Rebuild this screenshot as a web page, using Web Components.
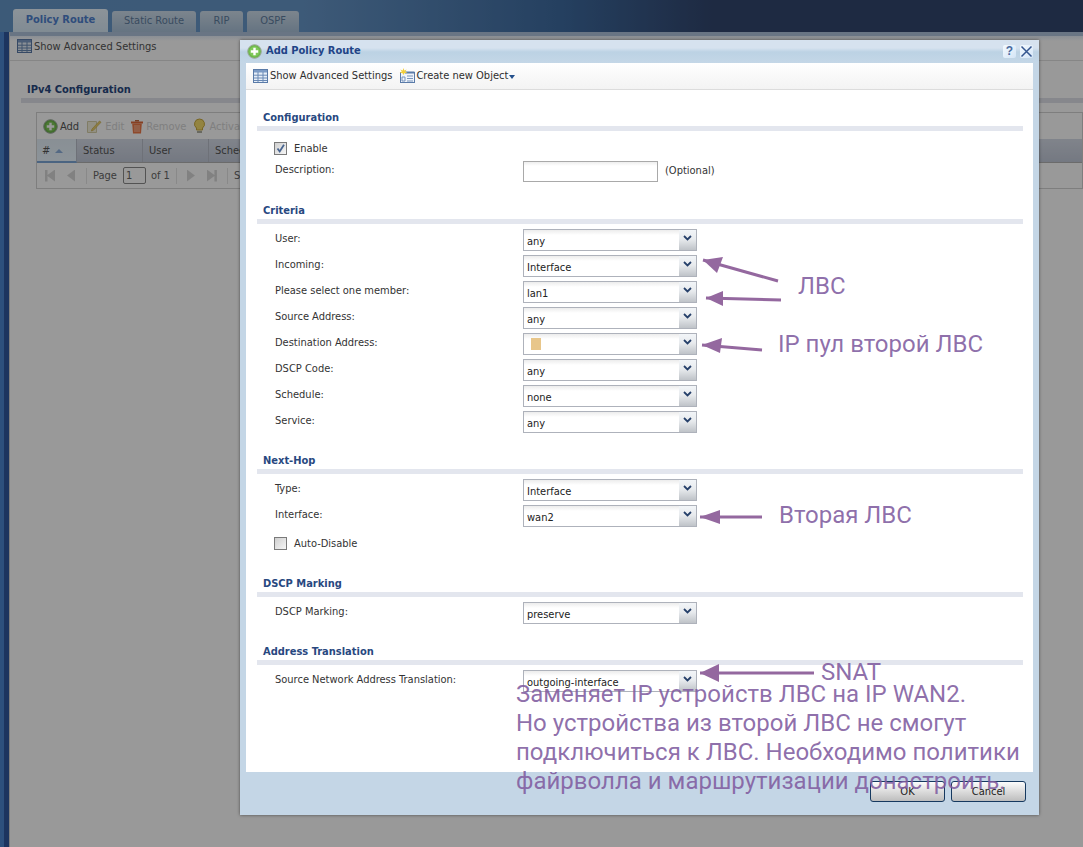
<!DOCTYPE html>
<html lang="ru">
<head>
<meta charset="utf-8">
<title>Add Policy Route</title>
<style>
  html, body { margin: 0; height: 847px; overflow: hidden; background: #fff; }
  body { font: 11px "DejaVu Sans Condensed", "DejaVu Sans", sans-serif; color: #333; }
</style>
</head>
<body>
<app-shell>
  <tab-bar slot="tabs">
    <tab-item active>Policy Route</tab-item>
    <tab-item w="84">Static Route</tab-item>
    <tab-item w="43">RIP</tab-item>
    <tab-item w="52">OSPF</tab-item>
  </tab-bar>
  <back-panel></back-panel>
</app-shell>
<modal-mask></modal-mask>
<policy-dialog>
  <form-section heading="Configuration" gap="19">
    <check-row checked tight>Enable</check-row>
    <form-row label="Description:"><text-box></text-box><span style="margin-left:7px;margin-top:-2px">(Optional)</span></form-row>
  </form-section>
  <form-section heading="Criteria" gap="18">
    <form-row label="User:"><combo-box>any</combo-box></form-row>
    <form-row label="Incoming:"><combo-box>Interface</combo-box></form-row>
    <form-row label="Please select one member:"><combo-box>lan1</combo-box></form-row>
    <form-row label="Source Address:"><combo-box>any</combo-box></form-row>
    <form-row label="Destination Address:"><combo-box><span style="display:block;width:10px;height:12px;margin:-2px 0 0 4px;background:#e8c68a"></span></combo-box></form-row>
    <form-row label="DSCP Code:"><combo-box>any</combo-box></form-row>
    <form-row label="Schedule:"><combo-box>none</combo-box></form-row>
    <form-row label="Service:"><combo-box>any</combo-box></form-row>
  </form-section>
  <form-section heading="Next-Hop" gap="20">
    <form-row label="Type:"><combo-box>Interface</combo-box></form-row>
    <form-row label="Interface:"><combo-box>wan2</combo-box></form-row>
    <check-row style="margin-top:1px">Auto-Disable</check-row>
  </form-section>
  <form-section heading="DSCP Marking" gap="18">
    <form-row label="DSCP Marking:"><combo-box>preserve</combo-box></form-row>
  </form-section>
  <form-section heading="Address Translation" gap="0">
    <form-row label="Source Network Address Translation:"><combo-box>outgoing-interface</combo-box></form-row>
  </form-section>
</policy-dialog>
<note-layer>
  <note-text x="798" y="272">ЛВС</note-text>
  <note-text x="778" y="330">IP пул второй ЛВС</note-text>
  <note-text x="779" y="501">Вторая ЛВС</note-text>
  <note-text x="821" y="658">SNAT</note-text>
  <note-text x="516" y="680">Заменяет IP устройств ЛВС на IP WAN2.<br>Но устройства из второй ЛВС не смогут<br>подключиться к ЛВС. Необходимо политики<br>файрволла и маршрутизации донастроить.</note-text>
</note-layer>

<script>
// shared icons
const ICONS = {
  table: `<svg width="15" height="14" viewBox="0 0 15 14"><rect x=".5" y=".5" width="14" height="13" fill="#e6eef8" stroke="#5a7ba8"/><rect x="1" y="1" width="13" height="2.5" fill="#7d9cc6"/><path d="M5 3v10M10 3v10M1 6.2h13M1 9h13M1 11.5h13" stroke="#6a8ab5" fill="none"/></svg>`,
  plus: `<svg width="15" height="15" viewBox="0 0 15 15"><circle cx="7.5" cy="7.5" r="6.8" fill="#6db84a" stroke="#9ba89a"/><circle cx="7.5" cy="7.5" r="5" fill="#7fc85a"/><path d="M7.5 3.8v7.4M3.8 7.5h7.4" stroke="#fff" stroke-width="2.4"/></svg>`,
  edit: `<svg width="16" height="15" viewBox="0 0 16 15"><path d="M1.5 2.5h9v11h-9z" fill="#f4f0dc" stroke="#d6cfa8"/><path d="M6 10l7.5-8 1.5 1.3L7.4 11.3 5.4 12z" fill="#ecd06a" stroke="#c9ad50" stroke-width=".7"/></svg>`,
  trash: `<svg width="12" height="15" viewBox="0 0 12 15"><path d="M4 1h4v1.5H4z" fill="#c06a40"/><path d="M0 2.5h12v2H0z" fill="#e06a3a"/><path d="M1.2 4.5h9.6L10 14.5H2z" fill="#ee7a48"/><path d="M4 6v7M6 6v7M8 6v7" stroke="#f8c4a8" fill="none"/></svg>`,
  bulb: `<svg width="13" height="16" viewBox="0 0 13 16"><path d="M6.5 1a5 5 0 0 1 3 9v2h-6v-2a5 5 0 0 1 3-9z" fill="#f6dc6c" stroke="#c8a93c"/><path d="M4 13h5v2H4z" fill="#b0b0a0"/></svg>`,
  create: `<svg width="16" height="15" viewBox="0 0 16 15"><rect x="1.5" y="4.5" width="14" height="10" fill="#eef3fa" stroke="#5a7ba8"/><rect x="6" y="3.5" width="9.5" height="2" fill="#5a7ba8"/><path d="M3 9h3v4H3zM8 8h6M8 10.5h6M8 13h6" stroke="#6a8ab5" fill="none" stroke-width=".9"/><path d="M4.5 0l.8 2.4L7.7 1.6 6.2 3.6 8.4 5H5.6L4.5 7 3.4 5H.6l2.2-1.4L1.3 1.6l2.4.8z" fill="#f2cf3a"/></svg>`
};

class AppShell extends HTMLElement {
  constructor() {
    super();
    this.attachShadow({ mode: 'open' }).innerHTML = `
      <style>
        :host { display: flex; flex-direction: column; height: 847px; }
        .row { flex: 1; display: flex; min-height: 0; }
        .rail { width: 10px; flex: none; background: linear-gradient(90deg, #4c85d0 0 4px, #30589e 4px 9px, #d0d0d0 9px); }
        .main { flex: 1; min-width: 0; display: flex; }
      </style>
      <slot name="tabs"></slot>
      <div class="row"><div class="rail"></div><div class="main"><slot></slot></div></div>`;
  }
}

class TabBar extends HTMLElement {
  constructor() {
    super();
    this.attachShadow({ mode: 'open' }).innerHTML = `
      <style>
        :host { display: flex; flex: none; height: 23px; padding: 9px 0 0 13px; gap: 4px; align-items: flex-end;
          background: linear-gradient(90deg, #6596c8, #6796c8 28%, #3e6ba0 52%, #32466e 66%, #32466e); }
      </style>
      <slot></slot>`;
  }
}

class TabItem extends HTMLElement {
  constructor() {
    super();
    const active = this.hasAttribute('active');
    const w = this.getAttribute('w') || 95;
    this.attachShadow({ mode: 'open' }).innerHTML = `
      <style>
        :host { display: block; box-sizing: border-box; width: ${w}px; height: ${active ? 23 : 21}px;
          border-radius: 3px 3px 0 0; text-align: center;
          line-height: ${active ? 21 : 19}px;
          font-weight: ${active ? 'bold' : 'normal'};
          color: ${active ? '#4f80cf' : '#5f7d9f'};
          background: linear-gradient(${active ? '#eaf6ff, #d6e8f6' : '#cfdeec, #a9c1d8'}); }
      </style>
      <slot></slot>`;
  }
}

class BackPanel extends HTMLElement {
  constructor() {
    super();
    this.attachShadow({ mode: 'open' }).innerHTML = `
      <style>
        :host { display: block; flex: 1; min-width: 0; background: #fff; border-top: 4px solid #b0c4dc; color: #555; }
        .bar { box-sizing: border-box; height: 25px; padding: 0 0 4px 7px; display: flex; align-items: center; gap: 2px;
          border-bottom: 1px solid #e0e0e0; background: linear-gradient(#e6eef8, #fff 5px); }
        .bar svg { flex: none; }
        h3 { margin: 0 0 1px; height: 15px; padding: 21px 0 0 17px; font-size: 11px; line-height: 15px; color: #28487f; }
        .rule { height: 5px; margin: 0 0 0 11px; background: #dfe2ea; }
        .grid { box-sizing: border-box; margin: 9px 0 0 26px; border: 1px solid #d2d2d2; height: 77px; display: flex; flex-direction: column; }
        .tools { height: 26px; display: flex; align-items: center; padding-left: 6px; gap: 7px; }
        .tools span { display: flex; align-items: center; gap: 3px; color: #d4d4d4; }
        .tools span.on { color: #555; gap: 2px; }
        .head { box-sizing: border-box; height: 24px; display: flex; background: linear-gradient(#d6dce8, #c2c9d8); border-bottom: 1px solid #b3b3b3; color: #555; }
        .head div { box-sizing: border-box; width: 66px; padding: 5px 0 0 6px; border-right: 1px solid #b8bdc8; display: flex; gap: 5px; line-height: 13px; }
        .head div:first-child { width: 40px; padding-left: 5px; border-bottom: 2px solid #7da7d8; background: linear-gradient(#e4eff8, #eaf6ff); margin-bottom: -1px; height: 24px; }
        .head div:first-child i { width: 0; height: 0; margin-top: 5px; border: 4px solid transparent; border-bottom: 4px solid #8cb0dc; border-top: 0; }
        .pager { flex: 1; display: flex; align-items: center; color: #666; }
        .pager i { display: block; flex: none; width: 8px; height: 12px; background: #d8d8d8; clip-path: polygon(100% 0, 100% 100%, 0 50%); }
        .pager i.r { clip-path: polygon(0 0, 100% 50%, 0 100%); }
        .pager i.f { width: 10px; clip-path: polygon(0 0, 25% 0, 25% 45%, 100% 0, 100% 100%, 25% 55%, 25% 100%, 0 100%); }
        .pager i.l { width: 10px; clip-path: polygon(0 0, 75% 45%, 75% 0, 100% 0, 100% 100%, 75% 100%, 75% 55%, 0 100%); }
        .pager s { display: block; width: 1px; height: 16px; background: #e4e4e4; flex: none; }
        .pager b { font-weight: normal; box-sizing: border-box; width: 23px; height: 17px; line-height: 15px; border: 1px solid #8a8a8a; border-radius: 2px; padding-left: 2px; background: #fff; }
      </style>
      <div class="bar">${ICONS.table}<span>Show Advanced Settings</span></div>
      <h3>IPv4 Configuration</h3>
      <div class="rule"></div>
      <div class="grid">
        <div class="tools">
          <span class="on">${ICONS.plus}Add</span>
          <span>${ICONS.edit}Edit</span>
          <span>${ICONS.trash}Remove</span>
          <span>${ICONS.bulb}Activate</span>
        </div>
        <div class="head"><div>#<i></i></div><div>Status</div><div>User</div><div>Schedule</div></div>
        <div class="pager">
          <i class="f" style="margin-left:8px"></i><i style="margin-left:12px"></i><s style="margin-left:11px"></s>
          <span style="margin-left:6px">Page</span><b style="margin-left:6px">1</b><span style="margin-left:5px">of 1</span>
          <s style="margin-left:6px"></s><i class="r" style="margin-left:10px"></i><i class="l" style="margin-left:12px"></i>
          <s style="margin-left:10px"></s><span style="margin-left:6px">Show</span>
        </div>
      </div>`;
  }
}

class ModalMask extends HTMLElement {
  constructor() {
    super();
    this.attachShadow({ mode: 'open' }).innerHTML = `
      <style>:host { display: block; position: absolute; inset: 0; background: rgba(0,0,0,.4); }</style>`;
  }
}

const dialogTpl = document.createElement('template');
dialogTpl.innerHTML = `
  <style>
    :host { display: flex; flex-direction: column; position: absolute; left: 240px; top: 40px; width: 799px; height: 775px;
      box-sizing: border-box; background: #c4d6e6; box-shadow: 0 0 3px rgba(0,0,0,.5); }
    .title { height: 23px; flex: none; display: flex; align-items: center; padding: 0 6px 0 7px; gap: 4px;
      background: linear-gradient(#d6e2ef 0 8px, #bcd2e4 12px, #c4d7e7); font-weight: bold; font-size: 11px; color: #1f4487; }
    .title span { flex: 1; padding-bottom: 2px; }
    .title i { display: block; width: 13px; height: 13px; border-radius: 2px; background: linear-gradient(135deg, #f4faff, #d4e5f6);
      font: bold 12px/13px "Liberation Sans", sans-serif; text-align: center; color: #4a6a9e; }
    .title i + i { margin-left: 0; }
    .body { flex: none; height: 709px; margin: 0 6px; background: #fff; display: flex; flex-direction: column; }
    .tools { height: 27px; flex: none; box-sizing: border-box; padding: 0 0 1px 7px; display: flex; align-items: center;
      background: linear-gradient(#fff, #f3f3f3); border-bottom: 1px solid #dcdcdc; color: #2e2e2e; }
    .tools .arr { width: 0; height: 0; border: 3px solid transparent; border-top: 4px solid #24508c; border-bottom: 0; margin: 3px 0 0 1px; }
    .form { padding: 20px 10px 0 11px; }
    .foot { flex: 1; display: flex; justify-content: flex-end; gap: 6px; padding: 9px 13px 0 0; }
    .foot button { width: 75px; height: 21px; padding: 0; box-sizing: border-box; border: 1px solid #16395f; border-radius: 3px;
      background: linear-gradient(#fcfcfc, #d9d9d9 55%, #bdbdbd); font: 11px "DejaVu Sans Condensed", sans-serif; color: #222; }
  </style>
  <div class="title">${ICONS.plus}<span>Add Policy Route</span><i>?</i><i><svg width="13" height="13" viewBox="0 0 13 13"><path d="M1.5 1.5l10 10M11.5 1.5l-10 10" stroke="#35568f" stroke-width="1.5" fill="none"/></svg></i></div>
  <div class="body">
    <div class="tools">${ICONS.table}<span style="margin:0 7px 0 2px">Show Advanced Settings</span>${ICONS.create}<span style="margin-left:1px">Create new Object</span><div class="arr"></div></div>
    <div class="form"><slot></slot></div>
  </div>
  <div class="foot"><button>OK</button><button>Cancel</button></div>`;

class PolicyDialog extends HTMLElement {
  constructor() {
    super();
    this.attachShadow({ mode: 'open' }).appendChild(dialogTpl.content.cloneNode(true));
  }
}

class FormSection extends HTMLElement {
  constructor() {
    super();
    this.attachShadow({ mode: 'open' }).innerHTML = `
      <style>
        :host { display: block; margin-bottom: ${this.getAttribute('gap') || 0}px; }
        h4 { margin: 0 0 1px; padding-left: 6px; height: 15px; line-height: 15px; font-size: 11px; font-weight: bold; color: #28487f; }
        .rule { height: 5px; background: #e3e6ee; }
        .rows { padding-top: 3px; }
      </style>
      <h4>${this.getAttribute('heading')}</h4>
      <div class="rule"></div>
      <div class="rows"><slot></slot></div>`;
  }
}

class FormRow extends HTMLElement {
  constructor() {
    super();
    this.attachShadow({ mode: 'open' }).innerHTML = `
      <style>
        :host { display: flex; height: 26px; align-items: center; padding-left: 18px; }
        label { width: 248px; flex: none; align-self: flex-start; padding-top: 5px; line-height: 14px; color: #333; white-space: nowrap; }
      </style>
      <label>${this.getAttribute('label')}</label><slot></slot>`;
  }
}

class CheckRow extends HTMLElement {
  constructor() {
    super();
    const on = this.hasAttribute('checked');
    this.attachShadow({ mode: 'open' }).innerHTML = `
      <style>
        :host { display: flex; height: 26px; align-items: center; padding-left: 17px; gap: 7px; color: #333;
          ${this.hasAttribute('tight') ? 'margin: 1px 0 -3px;' : ''} }
        .box { width: 13px; height: 13px; box-sizing: border-box; border: 1px solid #7a7a7a; background: linear-gradient(135deg, #cfcfcf, #f6f6f6); display: block; }
      </style>
      <svg class="box" viewBox="0 0 11 11">${on ? '<path d="M2.5 5.5l2.2 3L9 1.8" stroke="#48648f" stroke-width="1.8" fill="none"/>' : ''}</svg>
      <slot></slot>`;
  }
}

class TextBox extends HTMLElement {
  constructor() {
    super();
    this.attachShadow({ mode: 'open' }).innerHTML = `
      <style>
        :host { display: block; width: 135px; height: 21px; box-sizing: border-box; border: 1px solid #a9a9a9;
          background: linear-gradient(#eee, #fff 4px); }
      </style>`;
  }
}

class ComboBox extends HTMLElement {
  constructor() {
    super();
    this.attachShadow({ mode: 'open' }).innerHTML = `
      <style>
        :host { display: flex; width: 174px; height: 22px; box-sizing: border-box; border: 1px solid #aeb2bb; }
        .val { flex: 1; min-width: 0; padding: 2px 0 0 3px; display: flex; align-items: center; color: #222;
          background: linear-gradient(#ececec, #fff 5px); white-space: nowrap; }
        .btn { width: 17px; flex: none; display: flex; align-items: flex-start; justify-content: center; padding-top: 5px; box-sizing: border-box;
          background: linear-gradient(#f2f5f8, #e8ebee 45%, #bfc3c8); }
      </style>
      <div class="val"><slot></slot></div>
      <div class="btn"><svg width="9" height="6" viewBox="0 0 9 6"><path d="M1 1l3.5 3.4L8 1" stroke="#26406a" stroke-width="1.8" fill="none"/></svg></div>`;
  }
}

class NoteLayer extends HTMLElement {
  constructor() {
    super();
    const arrow = (x1, y1, x2, y2, a, b, c, d) =>
      `<path d="M${x1} ${y1}L${x2} ${y2}" stroke="#94689f" stroke-width="3" fill="none"/><path d="M${x2} ${y2}L${a} ${b}L${c} ${d}z" fill="#94689f"/>`;
    this.attachShadow({ mode: 'open' }).innerHTML = `
      <style>
        :host { display: block; position: absolute; inset: 0; pointer-events: none; }
        svg { position: absolute; inset: 0; }
      </style>
      <svg width="1083" height="847" viewBox="0 0 1083 847">
        ${arrow(778, 281, 703, 260, 723, 257, 717, 273)}
        ${arrow(781, 300, 706, 298, 723, 291, 723, 306)}
        ${arrow(762, 350, 702, 345, 722, 338, 720, 353)}
        ${arrow(762, 517, 700, 517, 720, 510, 720, 524)}
        ${arrow(814, 673, 700, 673, 719, 664, 719, 682)}
      </svg>
      <slot></slot>`;
  }
}

class NoteText extends HTMLElement {
  constructor() {
    super();
    this.attachShadow({ mode: 'open' }).innerHTML = `
      <style>
        :host { display: block; position: absolute; left: ${this.getAttribute('x')}px; top: ${this.getAttribute('y')}px;
          font: 24px/29px Roboto, "Noto Sans", sans-serif; color: rgba(128,92,160,.88); white-space: nowrap; }
      </style>
      <slot></slot>`;
  }
}

customElements.define('app-shell', AppShell);
customElements.define('tab-bar', TabBar);
customElements.define('tab-item', TabItem);
customElements.define('back-panel', BackPanel);
customElements.define('modal-mask', ModalMask);
customElements.define('policy-dialog', PolicyDialog);
customElements.define('form-section', FormSection);
customElements.define('form-row', FormRow);
customElements.define('check-row', CheckRow);
customElements.define('text-box', TextBox);
customElements.define('combo-box', ComboBox);
customElements.define('note-layer', NoteLayer);
customElements.define('note-text', NoteText);
</script>
</body>
</html>
